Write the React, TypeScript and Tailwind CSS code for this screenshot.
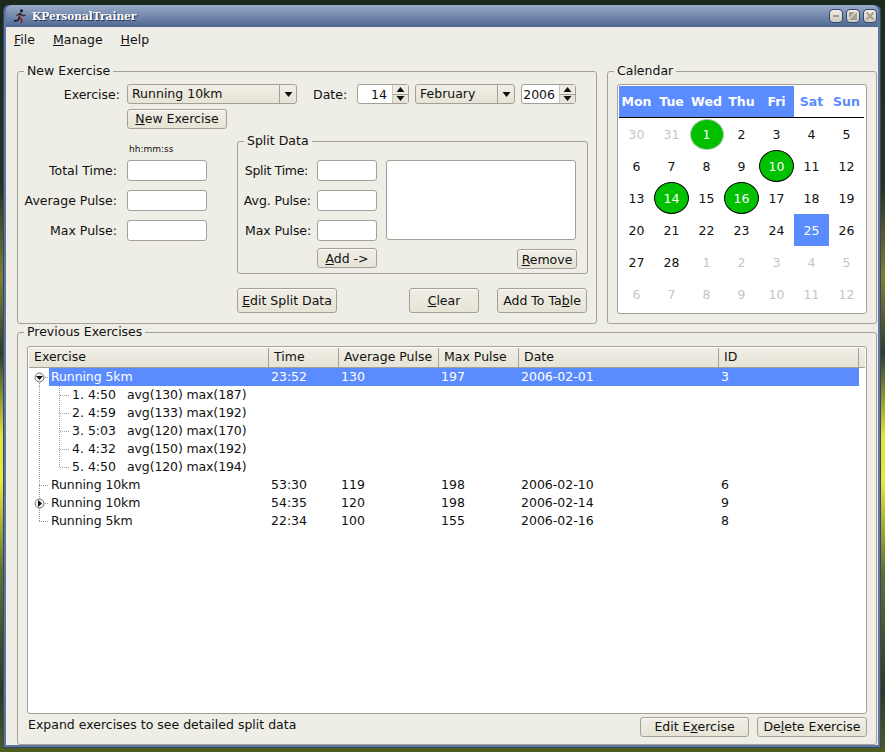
import type { ReactNode } from 'react'

const btn = 'flex items-center justify-center rounded-[3px] border border-[#a3a197] bg-gradient-to-b from-[#f0eee6] to-[#e7e3d6] shadow-[inset_0_1px_0_#fbfaf6]'
const field = 'rounded-[3px] border border-[#a3a197] bg-white'

function Group({ title, className, children }: { title: string; className: string; children: ReactNode }) {
  return (
    <fieldset className={'rounded-[3px] border border-[#a3a197] ' + className}>
      <legend className="ml-[6px] px-[3px] leading-[14px]">{title}</legend>
      {children}
    </fieldset>
  )
}

function Arrow({ dir }: { dir: 'up' | 'down' }) {
  return (
    <svg width="9" height="5" viewBox="0 0 9 5" className="block">
      <polygon points={dir === 'down' ? '0.5,0 8.5,0 4.5,5' : '0.5,5 8.5,5 4.5,0'} fill="#111" />
    </svg>
  )
}

function Combo({ value, className }: { value: string; className: string }) {
  return (
    <div className={'flex h-[20px] rounded-[3px] border border-[#a3a197] bg-gradient-to-b from-[#f0eee6] to-[#e7e3d6] ' + className}>
      <span className="flex-1 pl-[4px] leading-[17px]">{value}</span>
      <span className="flex w-[17px] items-center justify-center border-l border-[#a3a197]">
        <Arrow dir="down" />
      </span>
    </div>
  )
}

function Spin({ value, className, pad }: { value: string; className: string; pad: string }) {
  return (
    <div className={'flex h-[20px] rounded-[3px] border border-[#a3a197] bg-white ' + className}>
      <span className={'flex-1 text-right leading-[19px] ' + pad}>{value}</span>
      <span className="flex w-[16px] flex-col border-l border-[#c9c6ba]">
        <span className="flex flex-1 items-center justify-center border-b border-[#a3a197] bg-[#eeebe1]">
          <Arrow dir="up" />
        </span>
        <span className="flex flex-1 items-center justify-center bg-[#e7e3d6]">
          <Arrow dir="down" />
        </span>
      </span>
    </div>
  )
}

function Row({ label, labelWidth, inputWidth }: { label: string; labelWidth: string; inputWidth: string }) {
  return (
    <div className="flex h-[21px] items-center">
      <span className={'text-right ' + labelWidth}>{label}</span>
      <div className={'h-[21px] ' + field + ' ' + inputWidth} />
    </div>
  )
}

function Runner() {
  return (
    <svg width="14" height="15" viewBox="0 0 14 15">
      <circle cx="8.5" cy="1.8" r="1.5" fill="#111" />
      <path d="M7.5 4 L6.2 8.5 L8.8 10.5 L8.2 14" stroke="#8c1c1c" strokeWidth="1.6" fill="none" />
      <path d="M6.2 8.5 L4.8 11.5 L1 12" stroke="#111" strokeWidth="1.3" fill="none" />
      <path d="M3.5 6.5 L7 4.5 L10 6.8 L12.5 6" stroke="#222" strokeWidth="1.1" fill="none" />
    </svg>
  )
}

function WinButton({ children }: { children: ReactNode }) {
  return (
    <span className="flex h-[14px] w-[14px] items-center justify-center rounded-[4px] border border-[#34496f] bg-gradient-to-b from-[#f0eee6] to-[#cfcbbd]">
      <svg width="10" height="10" viewBox="0 0 10 10">{children}</svg>
    </span>
  )
}

const weeks = [
  ['30', '31', '1', '2', '3', '4', '5'],
  ['6', '7', '8', '9', '10', '11', '12'],
  ['13', '14', '15', '16', '17', '18', '19'],
  ['20', '21', '22', '23', '24', '25', '26'],
  ['27', '28', '1', '2', '3', '4', '5'],
  ['6', '7', '8', '9', '10', '11', '12'],
]

function DayCell({ week, col, day }: { week: number; col: number; day: string }) {
  const muted = (week === 0 && col < 2) || (week === 4 && col > 1) || week === 5
  const first = week === 0 && col === 2
  const marked = (week === 1 && col === 4) || (week === 2 && col === 1) || (week === 2 && col === 3)
  if (first) {
    return (
      <div className="flex h-[32px] items-center justify-center">
        <span className="flex h-[31px] w-[34px] items-center justify-center rounded-[50%] border border-[#b5c9b0] bg-[#00c000] text-white">{day}</span>
      </div>
    )
  }
  if (marked) {
    return (
      <div className="flex h-[32px] items-center justify-center">
        <span className="flex h-[32px] w-[35px] items-center justify-center rounded-[50%] border border-black bg-[#00c000] text-white">{day}</span>
      </div>
    )
  }
  if (week === 3 && col === 5) {
    return <div className="flex h-[32px] items-center justify-center bg-[#5b8cff] text-white">{day}</div>
  }
  return <div className={'flex h-[32px] items-center justify-center ' + (muted ? 'text-[#c6c6c0]' : '')}>{day}</div>
}

function Calendar() {
  return (
    <div className="ml-[9px] mt-[6px] h-[230px] w-[250px] rounded-[3px] border border-[#a3a197] bg-white p-px">
      <div className="grid h-[31px] grid-cols-[repeat(7,35px)] items-stretch font-bold">
        {['Mon', 'Tue', 'Wed', 'Thu', 'Fri'].map((d) => (
          <div key={d} className="flex items-center justify-center bg-[#5b8cff] text-white">{d}</div>
        ))}
        {['Sat', 'Sun'].map((d) => (
          <div key={d} className="flex items-center justify-center text-[#5b8cff]">{d}</div>
        ))}
      </div>
      <div className="h-px w-[245px] bg-black" />
      <div className="grid grid-cols-[repeat(7,35px)]">
        {weeks.map((w, i) => w.map((d, j) => <DayCell key={i + '-' + j} week={i} col={j} day={d} />))}
      </div>
    </div>
  )
}

const dots = { stroke: '#9a9a9a', strokeDasharray: '1 1', strokeWidth: 1 }

function ParentGuide({ last, state }: { last?: boolean; state?: 'open' | 'closed' }) {
  return (
    <svg width="20" height="18" viewBox="0 0 20 18" className="shrink-0">
      <line x1="10.5" y1={state === 'open' ? 9 : 0} x2="10.5" y2={last ? 9 : 18} {...dots} />
      <line x1="10" y1="9.5" x2="20" y2="9.5" {...dots} />
      {state && <circle cx="10.5" cy="9.5" r="4.5" fill="#f4f2ea" stroke="#6e6e68" />}
      {state === 'open' && <polygon points="7,8 14,8 10.5,12" fill="#111" />}
      {state === 'closed' && <polygon points="9,6 13,9.5 9,13" fill="#111" />}
    </svg>
  )
}

function ChildGuide({ last }: { last?: boolean }) {
  return (
    <svg width="41" height="18" viewBox="0 0 41 18" className="shrink-0">
      <line x1="10.5" y1="0" x2="10.5" y2="18" {...dots} />
      <line x1="30.5" y1="0" x2="30.5" y2={last ? 9 : 18} {...dots} />
      <line x1="31" y1="9.5" x2="41" y2="9.5" {...dots} />
    </svg>
  )
}

const cols = 'grid grid-cols-[220px_70px_100px_80px_200px_140px]'

function ExerciseRow({ cells, selected, last, state }: { cells: string[]; selected?: boolean; last?: boolean; state?: 'open' | 'closed' }) {
  return (
    <div className="flex h-[18px]">
      <ParentGuide last={last} state={state} />
      <div className={cols + ' w-[810px] items-center leading-[18px] ' + (selected ? 'bg-[#5b8cff] text-white' : '')}>
        {cells.map((c, i) => <span key={i} className={i === 0 ? 'pl-[2px] tracking-[-0.1px]' : 'pl-[2px]'}>{c}</span>)}
      </div>
    </div>
  )
}

function SplitRow({ split, detail, last }: { split: string; detail: string; last?: boolean }) {
  return (
    <div className="flex h-[18px] items-center leading-[18px]">
      <ChildGuide last={last} />
      <span className="ml-[2px] w-[55px]">{split}</span>
      <span className="tracking-[-0.12px]">{detail}</span>
    </div>
  )
}

const headers: [string, string][] = [
  ['Exercise', 'w-[240px]'],
  ['Time', 'w-[70px]'],
  ['Average Pulse', 'w-[100px]'],
  ['Max Pulse', 'w-[80px]'],
  ['Date', 'w-[200px]'],
  ['ID', 'w-[140px]'],
]

function ExerciseTable() {
  return (
    <div className="mt-[7px] h-[368px] rounded-[3px] border border-[#a3a197] bg-white p-px">
      <div className="flex h-[20px] border-b border-[#a3a197] bg-gradient-to-b from-[#f0eee6] to-[#e7e3d6] leading-[17px]">
        {headers.map(([h, w]) => (
          <div key={h} className={'border-r border-[#a3a197] pl-[5px] ' + w}>{h}</div>
        ))}
      </div>
      <ExerciseRow selected state="open" cells={['Running 5km', '23:52', '130', '197', '2006-02-01', '3']} />
      <SplitRow split="1. 4:50" detail="avg(130) max(187)" />
      <SplitRow split="2. 4:59" detail="avg(133) max(192)" />
      <SplitRow split="3. 5:03" detail="avg(120) max(170)" />
      <SplitRow split="4. 4:32" detail="avg(150) max(192)" />
      <SplitRow split="5. 4:50" detail="avg(120) max(194)" last />
      <ExerciseRow cells={['Running 10km', '53:30', '119', '198', '2006-02-10', '6']} />
      <ExerciseRow state="closed" cells={['Running 10km', '54:35', '120', '198', '2006-02-14', '9']} />
      <ExerciseRow last cells={['Running 5km', '22:34', '100', '155', '2006-02-16', '8']} />
    </div>
  )
}

export default function App() {
  return (
    <div className="h-[752px] w-[885px] overflow-hidden bg-[linear-gradient(180deg,#1c2a1e_0%,#27331f_25%,#7f7f30_37%,#2e3d2a_47%,#e4e438_58%,#e8e838_64%,#5f7030_76%,#2c3a24_92%,#4f5c1e_100%)] pl-[3px] pt-[5px] font-['DejaVu_Sans',sans-serif] text-[12.5px] leading-[15px] text-[#111]">
      <div className="flex h-[743px] w-[878px] flex-col rounded-t-[6px] border-x border-b border-[#33466b] bg-[#5f769f] px-[2px] pb-[2px]">
        <div className="flex h-[22px] shrink-0 items-center rounded-t-[6px] bg-gradient-to-b from-[#9aabc9] to-[#4f6892] pl-[7px] pr-[1px]">
          <Runner />
          <span className="ml-[5px] font-['DejaVu_Serif',serif] text-[10.6px] font-bold text-white [text-shadow:1px_1px_0_#26344f]">KPersonalTrainer</span>
          <span className="ml-auto flex gap-[3px]">
            <WinButton><rect x="2" y="4" width="6" height="2" fill="#a39f90" /></WinButton>
            <WinButton><path d="M1 9 L9 9 L9 1 Z M1 7 L1 1 L7 1 Z" fill="#a39f90" /></WinButton>
            <WinButton><path d="M1.5 1.5 L8.5 8.5 M8.5 1.5 L1.5 8.5" stroke="#a39f90" strokeWidth="2" /></WinButton>
          </span>
        </div>

        <div className="flex flex-1 flex-col bg-[#eeede6] pl-[11px] pr-px">
          <div className="-ml-[3px] flex h-[25px] shrink-0 items-center gap-[18px]">
            <span><u>F</u>ile</span>
            <span><u>M</u>anage</span>
            <span><u>H</u>elp</span>
          </div>

          <div className="mt-[12px] flex gap-[10px]">
            <Group title="New Exercise" className="h-[260px] w-[580px]">
              <div className="mt-[6px] flex items-center">
                <span className="w-[102px] text-right">Exercise:</span>
                <Combo value="Running 10km" className="ml-[7px] w-[170px]" />
                <span className="ml-[16px] w-[44px]">Date:</span>
                <Spin value="14" className="w-[52px]" pad="pr-[5px]" />
                <Combo value="February" className="ml-[6px] w-[100px]" />
                <Spin value="2006" className="ml-[6px] w-[55px]" pad="pr-[4px]" />
              </div>
              <div className={btn + ' ml-[109px] mt-[5px] h-[20px] w-[100px] pb-px'}><span><u>N</u>ew Exercise</span></div>
              <div className="mt-[5px] flex">
                <div className="w-[219px]">
                  <div className="ml-[111px] mt-[9px] h-[12px] text-[9px] leading-[12px]">hh:mm:ss</div>
                  <div className="mt-[5px] flex flex-col gap-[9px]">
                    <Row label="Total Time:" labelWidth="w-[99px] mr-[10px]" inputWidth="w-[80px]" />
                    <Row label="Average Pulse:" labelWidth="w-[99px] mr-[10px]" inputWidth="w-[80px]" />
                    <Row label="Max Pulse:" labelWidth="w-[99px] mr-[10px]" inputWidth="w-[80px]" />
                  </div>
                </div>
                <Group title="Split Data" className="h-[140px] w-[351px]">
                  <div className="mt-[12px] flex">
                    <div className="flex w-[139px] flex-col gap-[9px]">
                      <Row label="Split Time:" labelWidth="w-[70px] mr-[9px] tracking-[-0.3px]" inputWidth="w-[60px]" />
                      <Row label="Avg. Pulse:" labelWidth="w-[73px] mr-[6px] tracking-[-0.1px]" inputWidth="w-[60px]" />
                      <Row label="Max Pulse:" labelWidth="w-[73px] mr-[6px] tracking-[-0.1px]" inputWidth="w-[60px]" />
                      <div className={btn + ' -mt-[2px] ml-[79px] h-[20px] w-[60px]'}><span><u>A</u>dd -&gt;</span></div>
                    </div>
                    <div className="ml-[9px] w-[191px]">
                      <div className={field + ' h-[80px] w-[190px]'} />
                      <div className={btn + ' ml-[131px] mt-[9px] h-[20px] w-[60px]'}><span><u>R</u>emove</span></div>
                    </div>
                  </div>
                </Group>
              </div>
              <div className="mt-[14px] flex pl-[219px]">
                <div className={btn + ' h-[25px] w-[100px]'}><span><u>E</u>dit Split Data</span></div>
                <div className={btn + ' ml-[72px] h-[25px] w-[70px]'}><span><u>C</u>lear</span></div>
                <div className={btn + ' ml-[18px] h-[25px] w-[90px]'}><span>Add To Ta<u>b</u>le</span></div>
              </div>
            </Group>

            <Group title="Calendar" className="h-[260px] w-[270px]">
              <Calendar />
            </Group>
          </div>

          <Group title="Previous Exercises" className="mt-px h-[420px] w-[860px]">
            <div className="px-[9px]">
              <ExerciseTable />
              <div className="mt-[3px] flex h-[20px] items-start">
                <span className="ml-px">Expand exercises to see detailed split data</span>
                <div className={btn + ' ml-auto h-[20px] w-[109px] pb-px'}><span>Edit E<u>x</u>ercise</span></div>
                <div className={btn + ' ml-[8px] h-[20px] w-[110px] pb-px'}><span>De<u>l</u>ete Exercise</span></div>
              </div>
            </div>
          </Group>
        </div>
      </div>
    </div>
  )
}
